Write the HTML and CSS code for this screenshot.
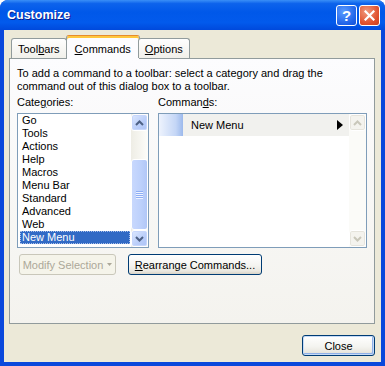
FILE: index.html
```html
<!DOCTYPE html>
<html lang="en">
<head>
  <meta charset="UTF-8">
  <meta name="viewport" content="width=device-width, initial-scale=1.0">
  <title>Customize</title>
  <link rel="stylesheet" href="styles.css">
</head>
<body>
  <div class="window">
    <div class="titlebar">
      <span class="title">Customize</span>
      <div class="caption">
        <span class="cap-btn cap-help">?</span>
        <span class="cap-btn cap-close">
          <svg width="11" height="11" viewBox="0 0 11 11"><path d="M1.5 1.5 L9.5 9.5 M9.5 1.5 L1.5 9.5" stroke="#fff" stroke-width="2.2" stroke-linecap="square"/></svg>
        </span>
      </div>
    </div>

    <div class="client">
      <div class="tabs">
        <div class="tab">Tool<u>b</u>ars</div>
        <div class="tab active"><u>C</u>ommands</div>
        <div class="tab"><u>O</u>ptions</div>
      </div>

      <div class="panel">
        <p class="hint">To add a command to a toolbar: select a category and drag the<br>command out of this dialog box to a toolbar.</p>

        <div class="lists">
          <div class="col">
            <div class="label">Cate<u>g</u>ories:</div>
            <div class="listbox cat-box">
              <ul class="items">
                <li>Go</li>
                <li>Tools</li>
                <li>Actions</li>
                <li>Help</li>
                <li>Macros</li>
                <li>Menu Bar</li>
                <li>Standard</li>
                <li>Advanced</li>
                <li>Web</li>
                <li class="selected">New Menu</li>
              </ul>
              <div class="scrollbar">
                <div class="sb-btn">
                  <svg width="9" height="6" viewBox="0 0 9 6"><polyline points="1,5 4.5,1.5 8,5" fill="none" stroke="#4d6185" stroke-width="2"/></svg>
                </div>
                <div class="sb-track">
                  <div class="sb-thumb">
                    <span class="grip"></span><span class="grip"></span><span class="grip"></span><span class="grip"></span>
                  </div>
                </div>
                <div class="sb-btn">
                  <svg width="9" height="6" viewBox="0 0 9 6"><polyline points="1,1 4.5,4.5 8,1" fill="none" stroke="#4d6185" stroke-width="2"/></svg>
                </div>
              </div>
            </div>
          </div>

          <div class="col">
            <div class="label">Comman<u>d</u>s:</div>
            <div class="listbox cmd-box">
              <div class="cmd-list">
                <div class="cmd-row">
                  <span class="cmd-icon"></span>
                  <span class="cmd-name">New Menu</span>
                  <svg class="cmd-arrow" width="6" height="10" viewBox="0 0 6 10"><polygon points="0,0 6,5 0,10" fill="#000"/></svg>
                </div>
              </div>
              <div class="scrollbar disabled">
                <div class="sb-btn">
                  <svg width="9" height="6" viewBox="0 0 9 6"><polyline points="1,5 4.5,1.5 8,5" fill="none" stroke="#c9c7ba" stroke-width="2"/></svg>
                </div>
                <div class="sb-track"></div>
                <div class="sb-btn">
                  <svg width="9" height="6" viewBox="0 0 9 6"><polyline points="1,1 4.5,4.5 8,1" fill="none" stroke="#c9c7ba" stroke-width="2"/></svg>
                </div>
              </div>
            </div>
          </div>
        </div>

        <div class="actions">
          <button class="btn btn-modify" disabled>Modify Selection
            <svg width="5" height="3" viewBox="0 0 5 3"><polygon points="0,0 5,0 2.5,3" fill="#aca899"/></svg>
          </button>
          <button class="btn btn-rearrange"><u>R</u>earrange Commands...</button>
        </div>
      </div>

      <div class="footer">
        <button class="btn btn-close">Close</button>
      </div>
    </div>
  </div>
</body>
</html>
```

FILE: styles.css
```css
* {
  box-sizing: border-box;
}
body {
  margin: 0;
  background: #fff;
  font-family: "Liberation Sans", Arial, sans-serif;
  font-size: 11px;
  color: #000;
}
u {
  text-decoration: underline;
  text-underline-offset: 1px;
}

/* window frame */
.window {
  width: 385px;
  height: 366px;
  display: flex;
  flex-direction: column;
  border-radius: 8px 8px 0 0;
  overflow: hidden;
  background: #0a48dc;
}
.titlebar {
  height: 30px;
  flex: none;
  display: flex;
  align-items: center;
  padding: 0 5px 0 7px;
  background: linear-gradient(#3a8ff7 0%, #0d63ec 12%, #0058e9 40%, #025aec 75%, #0049dc 100%);
}
.title {
  flex: 1;
  font-weight: bold;
  font-size: 12.5px;
  color: #fff;
  text-shadow: 1px 1px #0a1c8c;
}
.caption {
  display: flex;
  gap: 2px;
  margin-top: 1px;
}
.cap-btn {
  width: 21px;
  height: 21px;
  border: 1px solid #fff;
  border-radius: 3px;
  display: flex;
  align-items: center;
  justify-content: center;
}
.cap-help {
  background: radial-gradient(circle at 35% 30%, #5b9cff, #1f62e8 70%, #1451d6);
  color: #fff;
  font-weight: bold;
  font-size: 15px;
}
.cap-close {
  background: radial-gradient(circle at 35% 30%, #f09a7e, #e0502c 65%, #c8401f);
}

/* client area */
.client {
  flex: 1;
  display: flex;
  flex-direction: column;
  background: #ece9d8;
  border: 4px solid #0a48dc;
  border-top: 0;
  padding: 5px 6px 0 5px;
}
.tabs {
  display: flex;
  align-items: flex-end;
  height: 24px;
  padding-left: 2px;
  margin-bottom: -1px;
  position: relative;
  z-index: 1;
}
.tab {
  height: 20px;
  margin-bottom: 1px;
  padding: 0 6px;
  display: flex;
  align-items: center;
  border: 1px solid #919b9c;
  border-bottom: 0;
  border-radius: 3px 3px 0 0;
  background: linear-gradient(#fefefe, #f1f0ea);
}
.tab + .tab {
  margin-left: -1px;
}
.tab.active {
  height: 24px;
  margin: 0 -1px;
  padding: 2px 8px 0;
  border-top-color: #e68b2c;
  box-shadow: inset 0 2px 0 #ffc73c;
  background: #fcfcfe;
}
.panel {
  height: 266px;
  border: 1px solid #919b9c;
  background: linear-gradient(#fcfcfe, #f4f3ee);
  padding: 8px 7px 0;
}
.hint {
  margin: 0;
  line-height: 13px;
}
.lists {
  display: flex;
  gap: 9px;
  margin-top: 3px;
}
.label {
  line-height: 13px;
  margin-bottom: 4px;
}
.listbox {
  height: 135px;
  display: flex;
  background: #fff;
  border: 1px solid #7f9db9;
}
.cat-box {
  width: 132px;
}
.cmd-box {
  width: 209px;
}

/* categories list */
.items {
  flex: 1;
  list-style: none;
  margin: 0;
  padding: 0 1px 0 2px;
}
.items li {
  height: 13px;
  line-height: 13px;
  padding-left: 2px;
  white-space: nowrap;
}
.items li.selected {
  background: #316ac5;
  color: #fff;
  outline: 1px dotted #a9c0ea;
  outline-offset: -1px;
}

/* scrollbars */
.scrollbar {
  width: 17px;
  display: flex;
  flex-direction: column;
  background: linear-gradient(to right, #eeede5, #fdfdfa);
}
.sb-btn {
  height: 17px;
  flex: none;
  display: flex;
  align-items: center;
  justify-content: center;
  border: 1px solid #fff;
  border-radius: 3px;
  background: linear-gradient(135deg, #dde8fe, #b9cdf9 60%, #aec4f6);
  box-shadow: inset 0 0 0 1px #c6d6fb;
}
.sb-track {
  flex: 1;
  display: flex;
  flex-direction: column;
  justify-content: flex-end;
}
.sb-thumb {
  height: 71px;
  display: flex;
  flex-direction: column;
  align-items: center;
  justify-content: center;
  gap: 1px;
  border: 1px solid #fff;
  border-radius: 3px;
  background: linear-gradient(to right, #c8d8fd, #bcd0fb 60%, #b1c7f7);
}
.grip {
  width: 7px;
  height: 1px;
  background: #8eaef5;
  box-shadow: 0 1px #eef3ff;
}
.scrollbar.disabled {
  background: #fbfbf8;
}
.scrollbar.disabled .sb-btn {
  background: #f4f3ee;
  border-color: #fff;
  box-shadow: inset 0 0 0 1px #e6e4dc;
}

/* commands list */
.cmd-list {
  flex: 1;
}
.cmd-row {
  height: 22px;
  display: flex;
  align-items: center;
  background: #f1f1ee;
}
.cmd-icon {
  width: 24px;
  height: 100%;
  background: linear-gradient(to right, #eef3fd, #c4d6f6 70%, #9cb9ec);
}
.cmd-name {
  flex: 1;
  margin-left: 8px;
}
.cmd-arrow {
  margin-right: 6px;
}

/* buttons */
.actions {
  display: flex;
  gap: 12px;
  margin-top: 6px;
  padding-left: 2px;
}
.btn {
  height: 21px;
  padding: 0;
  font: inherit;
  color: #000;
  border: 1px solid #003c74;
  border-radius: 3px;
  background: linear-gradient(#ffffff, #f4f4f0 55%, #e9e7df 85%, #d8d3c7);
}
.btn:disabled {
  color: #aca899;
  border-color: #c9c7ba;
  background: #f5f4ea;
}
.btn-modify {
  width: 97px;
  display: flex;
  align-items: center;
  justify-content: center;
  gap: 4px;
}
.btn-rearrange {
  width: 134px;
}
.footer {
  display: flex;
  justify-content: flex-end;
  margin-top: 11px;
}
.btn-close {
  width: 73px;
  box-shadow: inset 0 0 0 1px #c6dbf7, inset -1px -1px 0 1px #8fb0e8;
}
```
